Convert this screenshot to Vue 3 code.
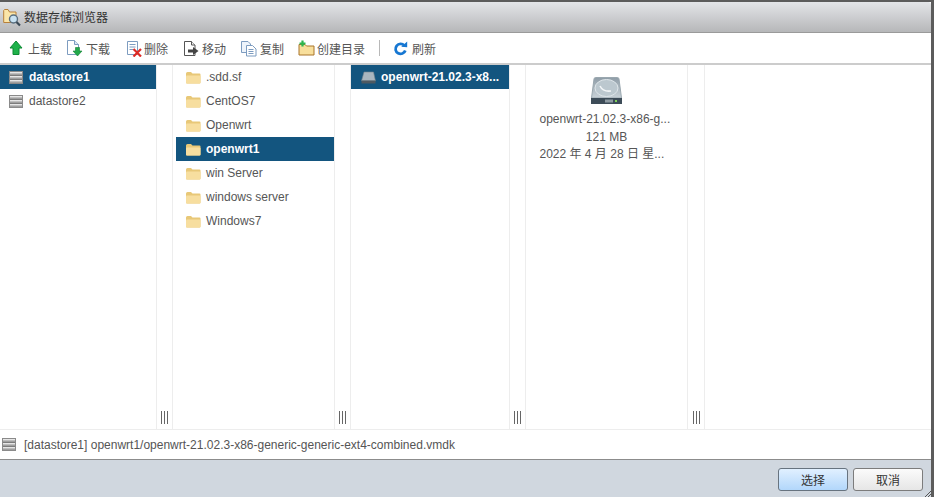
<script setup>
const stores = [
  { name: 'datastore1', active: true },
  { name: 'datastore2', active: false },
]
const folders = [
  { name: '.sdd.sf' },
  { name: 'CentOS7' },
  { name: 'Openwrt' },
  { name: 'openwrt1', active: true },
  { name: 'win Server' },
  { name: 'windows server' },
  { name: 'Windows7' },
]
</script>

<template>
  <div class="dialog">
    <header class="title">
      <svg class="title-icon" width="20" height="20" viewBox="0 0 20 20">
        <path d="M.7 3.5V15.5H13V5H6.5L5 2.5H1.5Z" fill="#fbe6a9" stroke="#b8813a" />
        <circle cx="10.5" cy="12" r="4" fill="#c8e2f2" stroke="#5a6f80" stroke-width="1.4" />
        <path d="M13.5 15L17 18.5" stroke="#3b4a57" stroke-width="2.2" />
      </svg>
      <span>数据存储浏览器</span>
    </header>

    <nav class="toolbar">
      <span class="tool t-up">
        <svg width="14" height="16" viewBox="0 0 14 16"><path d="M7 1L13 8H10V14.5H4V8H1Z" fill="#1fb24a" stroke="#0d8a35" /></svg>
        上载
      </span>
      <span class="tool t-down">
        <svg width="18" height="18" viewBox="0 0 18 18">
          <path d="M1.5 1.5H8.5L12.5 5.5V15.5H1.5Z" fill="#fff" stroke="#7d9cc0" />
          <path d="M8.5 1.5V5.5H12.5" fill="#dce8f5" stroke="#7d9cc0" />
          <path d="M9.5 8.5H13.5V12H16L11.5 17L7 12H9.5Z" fill="#22a84a" stroke="#117f33" stroke-width=".6" />
        </svg>
        下载
      </span>
      <span class="tool t-del">
        <svg width="17" height="17" viewBox="0 0 17 17">
          <path d="M1.5 1.5H11.5V14.5H1.5Z" fill="#fff" stroke="#7d9cc0" />
          <path d="M3.5 4.5H9.5M3.5 7H9.5M3.5 9.5H7" stroke="#7d9cc0" />
          <path d="M7.5 9L15 16.5M15 9L7.5 16.5" stroke="#dc2a25" stroke-width="2.2" />
        </svg>
        删除
      </span>
      <span class="tool t-move">
        <svg width="17" height="17" viewBox="0 0 17 17">
          <path d="M1.5 1.5H8.5L12 5V15.5H1.5Z" fill="#fff" stroke="#555" />
          <path d="M8.5 1.5V5H12" fill="#eee" stroke="#555" />
          <path d="M5 9.5H10V7L15.5 11L10 15V12.5H5Z" fill="#444" />
        </svg>
        移动
      </span>
      <span class="tool t-copy">
        <svg width="18" height="17" viewBox="0 0 18 17">
          <path d="M1.5 1.5H8L10.5 4V12.5H1.5Z" fill="#eef4fb" stroke="#7d9cc0" />
          <path d="M6.5 5.5H12.5L16 9V16H6.5Z" fill="#fff" stroke="#7d9cc0" />
          <path d="M8.5 9.5H13.5M8.5 11.5H13.5M8.5 13.5H13.5" stroke="#7d9cc0" />
        </svg>
        复制
      </span>
      <span class="tool t-new">
        <svg width="17" height="16" viewBox="0 0 17 16">
          <path d="M1 4.5H7L8.5 6H16V15H1Z" fill="#f8df9c" stroke="#a9742a" />
          <path d="M4.5 0.5V6.5M1.5 3.5H7.5" stroke="#2cb64e" stroke-width="2.2" />
        </svg>
        创建目录
      </span>
      <span class="sep"></span>
      <span class="tool t-refresh">
        <svg width="15" height="15" viewBox="0 0 15 15">
          <path d="M11.3 4.6A5 5 0 1 0 12.3 9.5" fill="none" stroke="#1677d2" stroke-width="2.8" />
          <path d="M8.2 5.8L14.2 6.2V.6Z" fill="#1677d2" />
        </svg>
        刷新
      </span>
    </nav>

    <main class="browser">
      <section class="col c1">
        <div v-for="s in stores" :key="s.name" class="row" :class="{ active: s.active }">
          <svg class="dsicon" width="14" height="13" viewBox="0 0 14 13">
            <rect x=".5" y=".5" width="13" height="12" fill="#bdbdbd" stroke="#8a8a8a" />
            <path d="M1 1.5H13M1 5.5H13M1 9.5H13" stroke="#e6e6e6" />
            <path d="M1 3.5H13M1 7.5H13M1 11.5H13" stroke="#a0a0a0" />
            <path d="M1 4.5H13M1 8.5H13" stroke="#7c7c7c" />
          </svg>
          <span class="label">{{ s.name }}</span>
        </div>
      </section>
      <div class="split"><i></i><i></i><i></i></div>

      <section class="col c2">
        <div v-for="f in folders" :key="f.name" class="row folder" :class="{ active: f.active }">
          <svg width="16" height="13" viewBox="0 0 16 13">
            <path d="M1 2.5Q1 1 2.5 1H6L7.5 2.5H14.5Q15.5 2.5 15.5 3.5V11.5Q15.5 12.5 14.5 12.5H2Q1 12.5 1 11.5Z" fill="#e8c878" />
            <path d="M1 5.5Q1 4.5 2 4.5H14.5Q15.5 4.5 15.5 5.5V11.5Q15.5 12.5 14.5 12.5H2Q1 12.5 1 11.5Z" fill="#f7de9f" />
          </svg>
          <span class="label">{{ f.name }}</span>
        </div>
      </section>
      <div class="split"><i></i><i></i><i></i></div>

      <section class="col c3">
        <div class="row vmdk active">
          <svg width="15" height="13" viewBox="0 0 15 13">
            <path d="M3 1H12.5L14.5 10H.5Z" fill="#a9b6bf" stroke="#76838c" stroke-width=".6" />
            <rect x=".5" y="9.5" width="14" height="3" fill="#4f5a62" />
          </svg>
          <span class="label">openwrt-21.02.3-x8...</span>
        </div>
      </section>
      <div class="split"><i></i><i></i><i></i></div>

      <section class="col c4">
        <svg class="disk" width="31" height="27" viewBox="0 0 31 27">
          <defs>
            <linearGradient id="diskBody" x1="0" y1="0" x2="0" y2="1">
              <stop offset="0" stop-color="#8f9da7" />
              <stop offset="1" stop-color="#c9d2d8" />
            </linearGradient>
          </defs>
          <path d="M4.5 .5H26.5Q27.8.5 28 2L30.5 21H.5L3 2Q3.2.5 4.5 .5Z" fill="url(#diskBody)" stroke="#9aa7af" />
          <ellipse cx="15.5" cy="11" rx="11.5" ry="8.5" fill="#bcc8cf" stroke="#dfe6ea" />
          <path d="M9 9Q12 15 20 14" fill="none" stroke="#f2f5f7" stroke-width="1.6" />
          <rect x="0" y="21" width="31" height="6" fill="#3d4c58" />
          <path d="M14 22.5H22V25.5H14Z" fill="#8e9aa2" />
          <rect x="24" y="23" width="2" height="2" fill="#7fd05a" />
        </svg>
        <div class="info">openwrt-21.02.3-x86-g...</div>
        <div class="info center">121 MB</div>
        <div class="info">2022 年 4 月 28 日 星...</div>
      </section>
      <div class="split wide"><i></i><i></i><i></i></div>

      <section class="col c5"></section>
    </main>

    <div class="status">
      <svg width="14" height="13" viewBox="0 0 14 13">
        <rect x=".5" y=".5" width="13" height="12" fill="#bdbdbd" stroke="#8a8a8a" />
        <path d="M1 1.5H13M1 5.5H13M1 9.5H13" stroke="#e6e6e6" />
        <path d="M1 3.5H13M1 7.5H13M1 11.5H13" stroke="#a0a0a0" />
        <path d="M1 4.5H13M1 8.5H13" stroke="#7c7c7c" />
      </svg>
      <span>[datastore1] openwrt1/openwrt-21.02.3-x86-generic-generic-ext4-combined.vmdk</span>
    </div>

    <footer class="footer">
      <button class="btn primary">选择</button>
      <button class="btn">取消</button>
      <svg class="grip" width="6" height="6" viewBox="0 0 6 6">
        <path d="M0 6L6 0M3 6L6 3" stroke="#555" />
      </svg>
    </footer>
  </div>
</template>

<style>
html, body { margin: 0; background: #fff; }
</style>

<style scoped>
.dialog {
  width: 934px;
  height: 497px;
  box-sizing: border-box;
  display: flex;
  flex-direction: column;
  overflow: hidden;
  border-top: 2px solid #5c5c5c;
  border-right: 3px solid #5c5c5c;
  font-family: "Liberation Sans", "Noto Sans CJK SC", sans-serif;
  font-size: 12px;
  color: #565656;
  background: #fff;
}
.title {
  height: 31px;
  flex: none;
  box-sizing: border-box;
  display: flex;
  align-items: center;
  padding-left: 3px;
  padding-bottom: 1px;
  border-top-right-radius: 3px;
  background: linear-gradient(#e3e5e8, #b6b7b9);
  border-bottom: 1px solid #9a9a9a;
  color: #333;
}
.title-icon { margin-right: 1px; }
.toolbar {
  height: 32px;
  flex: none;
  box-sizing: border-box;
  display: flex;
  align-items: center;
  border-bottom: 2px solid #ccc;
  padding-left: 9px;
}
.tool {
  display: flex;
  align-items: center;
  gap: 2px;
  color: #555;
  white-space: nowrap;
}
.t-up { width: 57px; gap: 5px; }
.t-down { width: 60px; }
.t-del { width: 57px; gap: 1px; }
.t-move { width: 57px; }
.t-copy { width: 58px; }
.t-new { width: 81px; }
.t-refresh { gap: 4px; }
.sep {
  width: 1px;
  height: 16px;
  background: #b8b8b8;
  margin-right: 13px;
}
.browser {
  flex: none;
  height: 365px;
  box-sizing: border-box;
  display: flex;
  border-bottom: 1px solid #ededed;
}
.col {
  flex: none;
  box-sizing: border-box;
  display: flex;
  flex-direction: column;
}
.c1 { width: 156px; }
.c2 { width: 161px; padding-left: 3px; }
.c3 { width: 158px; }
.c4 { width: 161px; align-items: center; padding-top: 12px; }
.c5 { flex: 1; }
.split {
  flex: none;
  width: 17px;
  box-sizing: border-box;
  border-left: 1px solid #ededed;
  border-right: 1px solid #ededed;
  display: flex;
  justify-content: center;
  align-items: flex-end;
  gap: 2px;
  padding-bottom: 5px;
}
.wide { width: 18px; }
.split i {
  display: block;
  width: 1px;
  height: 13px;
  background: #666;
}
.row {
  height: 24px;
  flex: none;
  display: flex;
  align-items: center;
  padding-left: 9px;
  gap: 6px;
  white-space: nowrap;
}
.folder { gap: 5px; }
.vmdk { padding-left: 10px; gap: 5px; }
.active {
  background: #13557f;
  color: #fff;
  font-weight: bold;
}
.disk { margin-bottom: 7px; }
.info {
  width: 134px;
  height: 17.5px;
  line-height: 17.5px;
  white-space: nowrap;
  color: #565656;
}
.center { text-align: center; }
.status {
  height: 30px;
  flex: none;
  box-sizing: border-box;
  display: flex;
  align-items: center;
  gap: 8px;
  padding-left: 2px;
  border-bottom: 1px solid #8c8c8c;
  color: #555;
}
.footer {
  flex: 1;
  position: relative;
  display: flex;
  justify-content: flex-end;
  align-items: center;
  gap: 5px;
  padding-right: 8px;
  padding-top: 1px;
  background: #d0d7df;
}
.btn {
  width: 70px;
  height: 23px;
  box-sizing: border-box;
  border: 1px solid #7c7c7c;
  border-radius: 3px;
  padding: 0;
  font: inherit;
  color: #333;
  background: linear-gradient(#fbfbfb, #e6e6e6);
}
.primary {
  border-color: #67737f;
  background: linear-gradient(#e1f0ff, #b2d7fb);
}
.grip {
  position: absolute;
  right: 0;
  bottom: 0;
}
</style>
